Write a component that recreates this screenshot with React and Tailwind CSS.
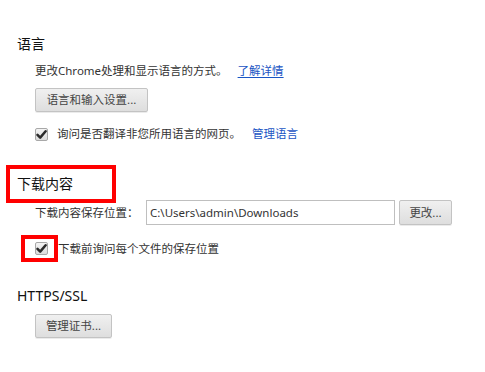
import React from 'react';

const Check = () => (
  <div className="w-[13px] h-[13px] shrink-0 rounded-[2px] border border-[#a8a8a8] bg-gradient-to-b from-[#f4f4f4] to-[#dcdcdc] flex items-center justify-center">
    <svg width="11" height="11" viewBox="0 0 11 11">
      <path d="M1.5 5.8 L4.2 8.6 L9.6 2.2" fill="none" stroke="#2b2b2b" strokeWidth="2.5" strokeLinecap="round" strokeLinejoin="round" />
    </svg>
  </div>
);

const Btn = ({ children, w }) => (
  <button className={`${w} h-[24px] rounded-[2px] border border-[#c3c3c3] bg-gradient-to-b from-[#f0f0f0] to-[#dedede] text-[11.5px] leading-[16px] text-[#444] shadow-[0_1px_0_rgba(0,0,0,0.08)]`}>
    {children}
  </button>
);

export default function App() {
  return (
    <div className="w-[485px] h-[372px] bg-white font-['Noto_Sans','Noto_Sans_CJK_SC',sans-serif] text-[#333] overflow-hidden">
      <div className="pt-[34px]">
        {/* 语言 */}
        <div className="pl-[17px] text-[14px] leading-[20px] text-[#111]">语言</div>
        <div className="pl-[35px] mt-[9px] text-[11.5px] leading-[16px] flex">
          <span>更改Chrome处理和显示语言的方式。</span>
          <span className="ml-[10px] text-[#1a55c4] underline underline-offset-2">了解详情</span>
        </div>
        <div className="pl-[35px] mt-[7px]">
          <Btn w="w-[113px]">语言和输入设置...</Btn>
        </div>
        <div className="pl-[35px] mt-[14px] flex items-center text-[11.5px] leading-[16px]">
          <Check />
          <span className="ml-[9px]">询问是否翻译非您所用语言的网页。</span>
          <span className="ml-[11px] text-[#1a55c4]">管理语言</span>
        </div>

        {/* 下载内容 */}
        <div className="ml-[6px] mt-[23px] w-[110px] h-[38px] border-4 border-[#ff0000] pl-[7px] flex items-center text-[14px] leading-[20px] text-[#111]">
          下载内容
        </div>
        <div className="pl-[35px] -mt-[3px] flex items-center text-[11.5px] leading-[16px]">
          <span className="w-[111px]">下载内容保存位置：</span>
          <div className="w-[249px] h-[25px] border border-[#bfbfbf] bg-white flex items-center pl-[3px] text-[#333]">
            C:\Users\admin\Downloads
          </div>
          <div className="ml-[4px]">
            <Btn w="w-[53px] h-[25px]">更改...</Btn>
          </div>
        </div>
        <div className="pl-[21px] mt-[10px] flex items-center text-[11.5px] leading-[16px]">
          <div className="w-[37px] h-[27px] border-4 border-[#ff0000] pl-[10px] flex items-center">
            <Check />
          </div>
          <span>下载前询问每个文件的保存位置</span>
        </div>

        {/* HTTPS/SSL */}
        <div className="pl-[17px] mt-[24px] text-[14px] leading-[20px] text-[#111]">HTTPS/SSL</div>
        <div className="pl-[35px] mt-[6px]">
          <Btn w="w-[77px]">管理证书...</Btn>
        </div>
      </div>
    </div>
  );
}
